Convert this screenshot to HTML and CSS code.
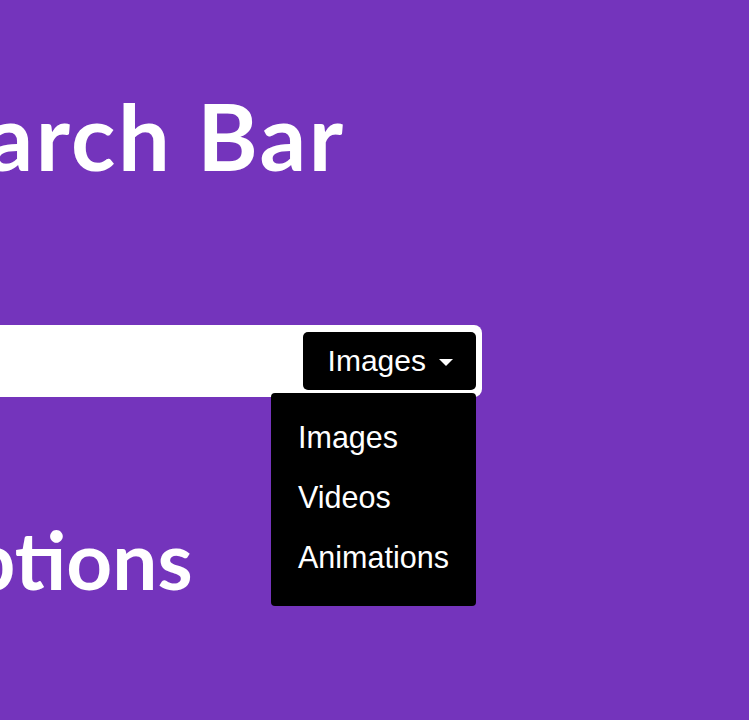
FILE: index.html
```html
<!DOCTYPE html>
<html lang="en">
<head>
<meta charset="utf-8">
<title>Search Bar</title>
<link rel="stylesheet" href="styles.css">
</head>
<body>
<main class="page">
  <h1 class="title">Search Bar</h1>
  <div class="search">
    <input class="search-input" type="text" aria-label="Search">
    <div class="dropdown">
      <button class="dropdown-toggle" type="button">Images <span class="caret"></span></button>
      <ul class="dropdown-menu">
        <li class="dropdown-item">Images</li>
        <li class="dropdown-item">Videos</li>
        <li class="dropdown-item">Animations</li>
      </ul>
    </div>
  </div>
  <h2 class="subtitle">Options</h2>
</main>
</body>
</html>
```

FILE: styles.css
```css
html, body {
  margin: 0;
  padding: 0;
}
body {
  background: #7434bc;
  overflow: hidden;
  height: 720px;
}
.page {
  margin-left: -118px;
  padding-top: 81px;
  width: 600px;
}
.title {
  margin: 0;
  font-family: Lato, "Open Sans", sans-serif;
  font-weight: 700;
  font-size: 92px;
  line-height: 110px;
  letter-spacing: 2.5px;
  color: #ffffff;
  white-space: nowrap;
}
.search {
  margin-top: 134px;
  display: flex;
  align-items: center;
  justify-content: space-between;
  background: #ffffff;
  border-radius: 8px;
  padding: 7px 6px 7px 10px;
  height: 58px;
}
.search-input {
  flex: 1;
  border: none;
  outline: none;
  background: transparent;
  font-family: "Liberation Sans", Arial, sans-serif;
  font-size: 30px;
  min-width: 0;
}
.dropdown {
  position: relative;
}
.dropdown-toggle {
  display: flex;
  align-items: center;
  gap: 13px;
  height: 58px;
  padding: 0 23px 0 25px;
  background: #000000;
  color: #ffffff;
  border: none;
  border-radius: 5px;
  font-family: "Liberation Sans", Arial, sans-serif;
  font-size: 30px;
  cursor: pointer;
}
.caret {
  width: 0;
  height: 0;
  border-left: 7px solid transparent;
  border-right: 7px solid transparent;
  border-top: 7px solid #ffffff;
  margin-top: 2px;
}
.dropdown-menu {
  position: absolute;
  top: calc(100% + 3px);
  right: 0;
  width: 205px;
  margin: 0;
  padding: 14px 0 19px;
  list-style: none;
  background: #000000;
  border-radius: 4px;
  z-index: 2;
}
.dropdown-item {
  padding: 0 27px;
  line-height: 60px;
  height: 60px;
  color: #ffffff;
  font-family: "Liberation Sans", Arial, sans-serif;
  font-size: 30.5px;
  white-space: nowrap;
}
.subtitle {
  margin: 114px 0 0 24px;
  font-family: Lato, "Open Sans", sans-serif;
  font-weight: 700;
  font-size: 80px;
  line-height: 96px;
  color: #ffffff;
  white-space: nowrap;
}
```
